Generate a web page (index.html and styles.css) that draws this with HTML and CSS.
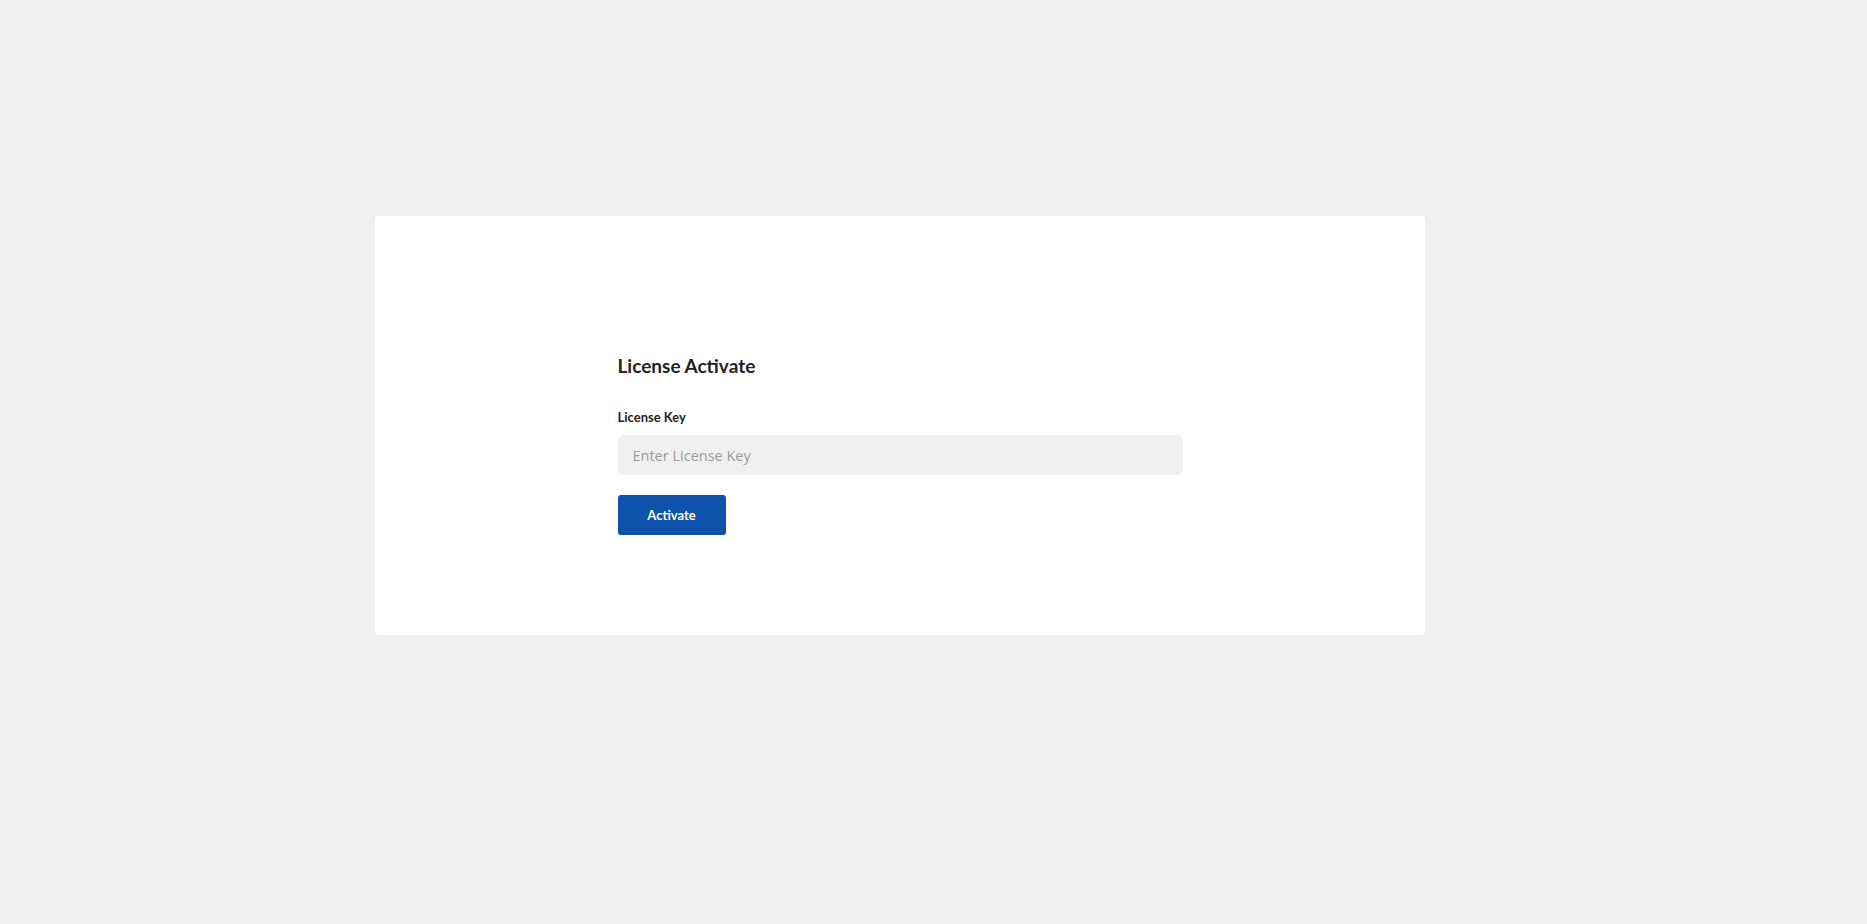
FILE: index.html
```html
<!DOCTYPE html>
<html lang="en">
<head>
<meta charset="utf-8">
<title>License Activate</title>
<link rel="stylesheet" href="styles.css">
</head>
<body>
<div class="page">
  <div class="card">
    <form class="form">
      <h2 class="title">License Activate</h2>
      <label class="label" for="key">License Key</label>
      <input class="input" id="key" type="text" placeholder="Enter License Key">
      <button class="btn" type="button">Activate</button>
    </form>
  </div>
</div>
</body>
</html>
```
FILE: styles.css
```css
html, body {
  margin: 0;
  padding: 0;
  background: #f0f0f0;
}
body {
  font-family: "Lato", "Open Sans", sans-serif;
  color: #232323;
}
.page {
  padding: 216px 0 0 375px;
  display: flex;
  justify-content: flex-start;
}
.card {
  width: 1050px;
  background: #ffffff;
  border-radius: 4px;
  padding: 138px 0 100px;
  box-sizing: border-box;
}
.form {
  width: 565px;
  margin: 0 auto;
  display: flex;
  flex-direction: column;
  align-items: flex-start;
}
.title {
  margin: 0;
  font-size: 19px;
  line-height: 24px;
  font-weight: 700;
  color: #232323;
}
.label {
  margin-top: 31px;
  font-size: 13px;
  line-height: 16px;
  font-weight: 700;
  color: #232323;
}
.input {
  margin-top: 10px;
  width: 100%;
  height: 40px;
  box-sizing: border-box;
  border: none;
  border-radius: 6px;
  background: #f0f0f0;
  padding: 0 15px;
  font-family: "Open Sans", sans-serif;
  font-size: 14.5px;
  color: #333;
  outline: none;
}
.input::placeholder {
  color: #9a9a9a;
}
.btn {
  margin-top: 20px;
  width: 108px;
  height: 40px;
  border: none;
  border-radius: 3px;
  background: #0e52a9;
  color: #ffffff;
  font-family: "Lato", sans-serif;
  font-weight: 700;
  font-size: 13px;
  cursor: pointer;
}
```
